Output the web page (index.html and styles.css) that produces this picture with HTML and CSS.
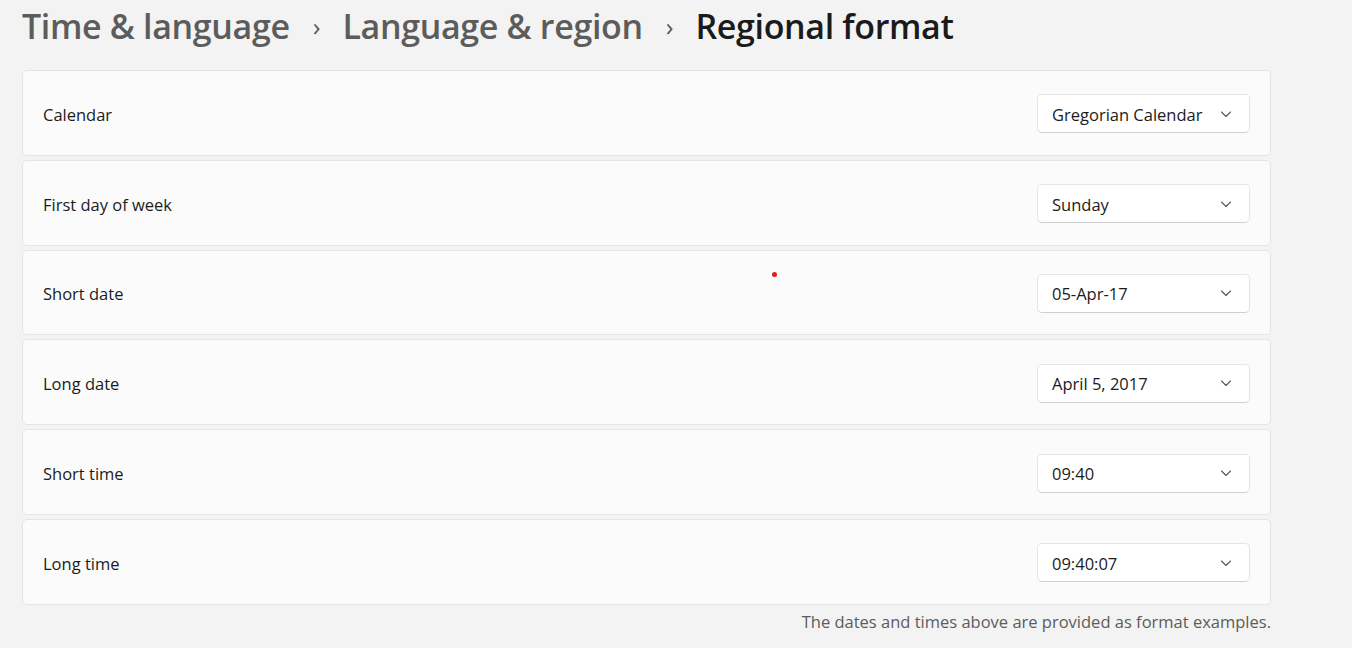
FILE: index.html
```html
<!DOCTYPE html>
<html lang="en">
<head>
<meta charset="utf-8">
<title>Regional format</title>
<link rel="stylesheet" href="styles.css">
</head>
<body>
<div class="page">
  <header class="breadcrumb">
    <span class="crumb">Time &amp; language</span>
    <span class="sep">›</span>
    <span class="crumb">Language &amp; region</span>
    <span class="sep">›</span>
    <span class="crumb current">Regional format</span>
  </header>
  <div class="list">
    <div class="card"><span class="label">Calendar</span><div class="combo"><span>Gregorian Calendar</span><svg class="chev" viewBox="0 0 12 7" width="12" height="7"><path d="M1.5 1l4.5 4.5 4.5-4.5" fill="none" stroke="#5a5a5a" stroke-width="1.1" stroke-linecap="round" stroke-linejoin="round"/></svg></div></div>
    <div class="card"><span class="label">First day of week</span><div class="combo"><span>Sunday</span><svg class="chev" viewBox="0 0 12 7" width="12" height="7"><path d="M1.5 1l4.5 4.5 4.5-4.5" fill="none" stroke="#5a5a5a" stroke-width="1.1" stroke-linecap="round" stroke-linejoin="round"/></svg></div></div>
    <div class="card"><span class="label">Short date</span><div class="combo"><span>05-Apr-17</span><svg class="chev" viewBox="0 0 12 7" width="12" height="7"><path d="M1.5 1l4.5 4.5 4.5-4.5" fill="none" stroke="#5a5a5a" stroke-width="1.1" stroke-linecap="round" stroke-linejoin="round"/></svg></div><span class="dot"></span></div>
    <div class="card"><span class="label">Long date</span><div class="combo"><span>April 5, 2017</span><svg class="chev" viewBox="0 0 12 7" width="12" height="7"><path d="M1.5 1l4.5 4.5 4.5-4.5" fill="none" stroke="#5a5a5a" stroke-width="1.1" stroke-linecap="round" stroke-linejoin="round"/></svg></div></div>
    <div class="card"><span class="label">Short time</span><div class="combo"><span>09:40</span><svg class="chev" viewBox="0 0 12 7" width="12" height="7"><path d="M1.5 1l4.5 4.5 4.5-4.5" fill="none" stroke="#5a5a5a" stroke-width="1.1" stroke-linecap="round" stroke-linejoin="round"/></svg></div></div>
    <div class="card"><span class="label">Long time</span><div class="combo"><span>09:40:07</span><svg class="chev" viewBox="0 0 12 7" width="12" height="7"><path d="M1.5 1l4.5 4.5 4.5-4.5" fill="none" stroke="#5a5a5a" stroke-width="1.1" stroke-linecap="round" stroke-linejoin="round"/></svg></div></div>
  </div>
  <p class="note">The dates and times above are provided as format examples.</p>
</div>
</body>
</html>
```

FILE: styles.css
```css
html, body {
  margin: 0;
  padding: 0;
  background: #f3f3f3;
}
body {
  font-family: "Open Sans", "Noto Sans", sans-serif;
  color: #1b1b1b;
  width: 1352px;
  height: 648px;
  overflow: hidden;
}
.page {
  padding: 0 81px 0 22px;
}
.breadcrumb {
  height: 70px;
  display: flex;
  align-items: flex-start;
  padding-top: 2px;
  box-sizing: border-box;
}
.crumb {
  font-size: 34px;
  font-weight: 600;
  color: #5c5c5c;
  line-height: 48px;
  letter-spacing: -0.35px;
}
.crumb.current {
  color: #1b1b1b;
}
.sep {
  font-size: 26px;
  color: #5c5c5c;
  line-height: 48px;
  padding: 0 22px 0 23px;
}
.list {
  display: flex;
  flex-direction: column;
  gap: 4px;
}
.card {
  position: relative;
  height: 85.8px;
  box-sizing: border-box;
  background: #fbfbfb;
  border: 1px solid #e5e5e5;
  border-radius: 5px;
  display: flex;
  align-items: center;
  justify-content: space-between;
  padding: 2px 20px 0 20px;
}
.label {
  font-size: 16.5px;
  color: #1b1b1b;
  padding-top: 1px;
}
.combo {
  width: 213px;
  height: 39px;
  box-sizing: border-box;
  background: #ffffff;
  border: 1px solid #e5e5e5;
  border-bottom-color: #cfcfcf;
  border-radius: 5px;
  display: flex;
  align-items: center;
  justify-content: space-between;
  padding: 1px 17px 0 14px;
  font-size: 16.5px;
  color: #1b1b1b;
}
.chev {
  display: block;
}
.dot {
  position: absolute;
  left: 749px;
  top: 21px;
  width: 5px;
  height: 5px;
  border-radius: 50%;
  background: #e81b1b;
}
.note {
  margin: 5px 0 0 0;
  text-align: right;
  font-size: 16.5px;
  color: #5c5c5c;
}
```
